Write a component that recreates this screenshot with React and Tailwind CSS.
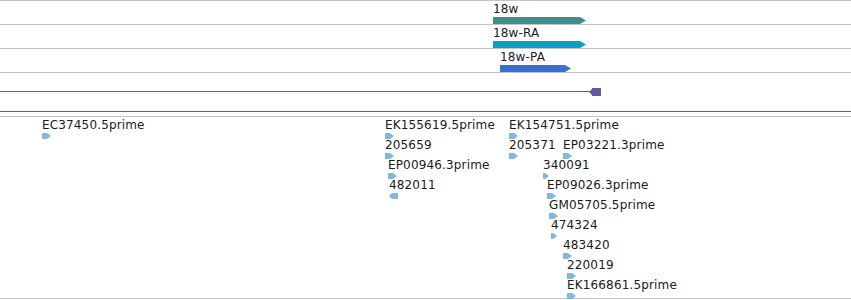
import React from 'react';

const genes = [
  { label: '18w', x: 493, top: 0, w: 92, color: '#3f8f8e' },
  { label: '18w-RA', x: 493, top: 24, w: 92, color: '#0aa0c0' },
  { label: '18w-PA', x: 500, top: 48, w: 70, color: '#3a6fcf' },
];

const hits = [
  ['EC37450.5prime', 42, 0, 'r'],
  ['EK155619.5prime', 385, 0, 'r'],
  ['205659', 385, 1, 'r'],
  ['EP00946.3prime', 388, 2, 'r'],
  ['482011', 389, 3, 'l'],
  ['EK154751.5prime', 509, 0, 'r'],
  ['205371', 509, 1, 'r'],
  ['EP03221.3prime', 563, 1, 'r'],
  ['340091', 543, 2, 's'],
  ['EP09026.3prime', 547, 3, 'r'],
  ['GM05705.5prime', 549, 4, 'r'],
  ['474324', 551, 5, 's'],
  ['483420', 563, 6, 'r'],
  ['220019', 567, 7, 'r'],
  ['EK166861.5prime', 567, 8, 'r'],
];

function Arrow({ dir }) {
  if (dir === 'l') {
    return (
      <svg width="9" height="6" viewBox="0 0 9 6">
        <polygon points="0,3 3,0 9,0 9,6 3,6" fill="#82b7de" />
      </svg>
    );
  }
  if (dir === 's') {
    return (
      <svg width="6" height="6" viewBox="0 0 6 6">
        <polygon points="0,0 2,0 6,3 2,6 0,6" fill="#82b7de" />
      </svg>
    );
  }
  return (
    <svg width="9" height="6" viewBox="0 0 9 6">
      <polygon points="0,0 5,0 9,3 5,6 0,6" fill="#82b7de" />
    </svg>
  );
}

function GeneTrack({ g }) {
  return (
    <div className="relative h-6 border-t border-[#c4c4c4]">
      <div className="absolute flex flex-col" style={{ left: g.x, top: 1 }}>
        <span className="text-[12px] leading-[14px] tracking-[0.15px] text-[#1a1a1a]">{g.label}</span>
        <svg width={g.w + 2} height="7" viewBox={`0 0 ${g.w + 2} 7`} className="mt-[1px]">
          <polygon
            points={`0,0 ${g.w - 5},0 ${g.w + 1},3.5 ${g.w - 5},7 0,7`}
            fill={g.color}
          />
        </svg>
      </div>
    </div>
  );
}

export default function App() {
  return (
    <div
      className="w-[851px] h-[300px] bg-white overflow-hidden"
      style={{ fontFamily: '"DejaVu Sans", sans-serif' }}
    >
      {genes.map((g) => (
        <GeneTrack key={g.label} g={g} />
      ))}
      <div className="relative h-[39px] border-t border-[#c4c4c4]">
        <div className="absolute left-0 top-[18px] w-[592px] h-px bg-[#6a54a3]" />
        <svg className="absolute left-[589px] top-[15px]" width="12" height="8" viewBox="0 0 12 8">
          <polygon points="0,4 3,1 3,0 12,0 12,8 3,8 3,7" fill="#6a54a3" />
        </svg>
      </div>
      <div className="h-px bg-[#6a54a3]" />
      <div className="h-1" />
      <div className="relative h-[183px] border-t border-[#c4c4c4] border-b">
        {hits.map(([label, x, row, dir]) => (
          <div
            key={label}
            className="absolute flex flex-col"
            style={{ left: x, top: 1 + row * 20 }}
          >
            <span className="text-[12px] leading-[14px] tracking-[0.15px] text-[#1a1a1a] whitespace-nowrap">{label}</span>
            <div className="h-[6px] mt-[1px] flex">
              <Arrow dir={dir} />
            </div>
          </div>
        ))}
      </div>
    </div>
  );
}
